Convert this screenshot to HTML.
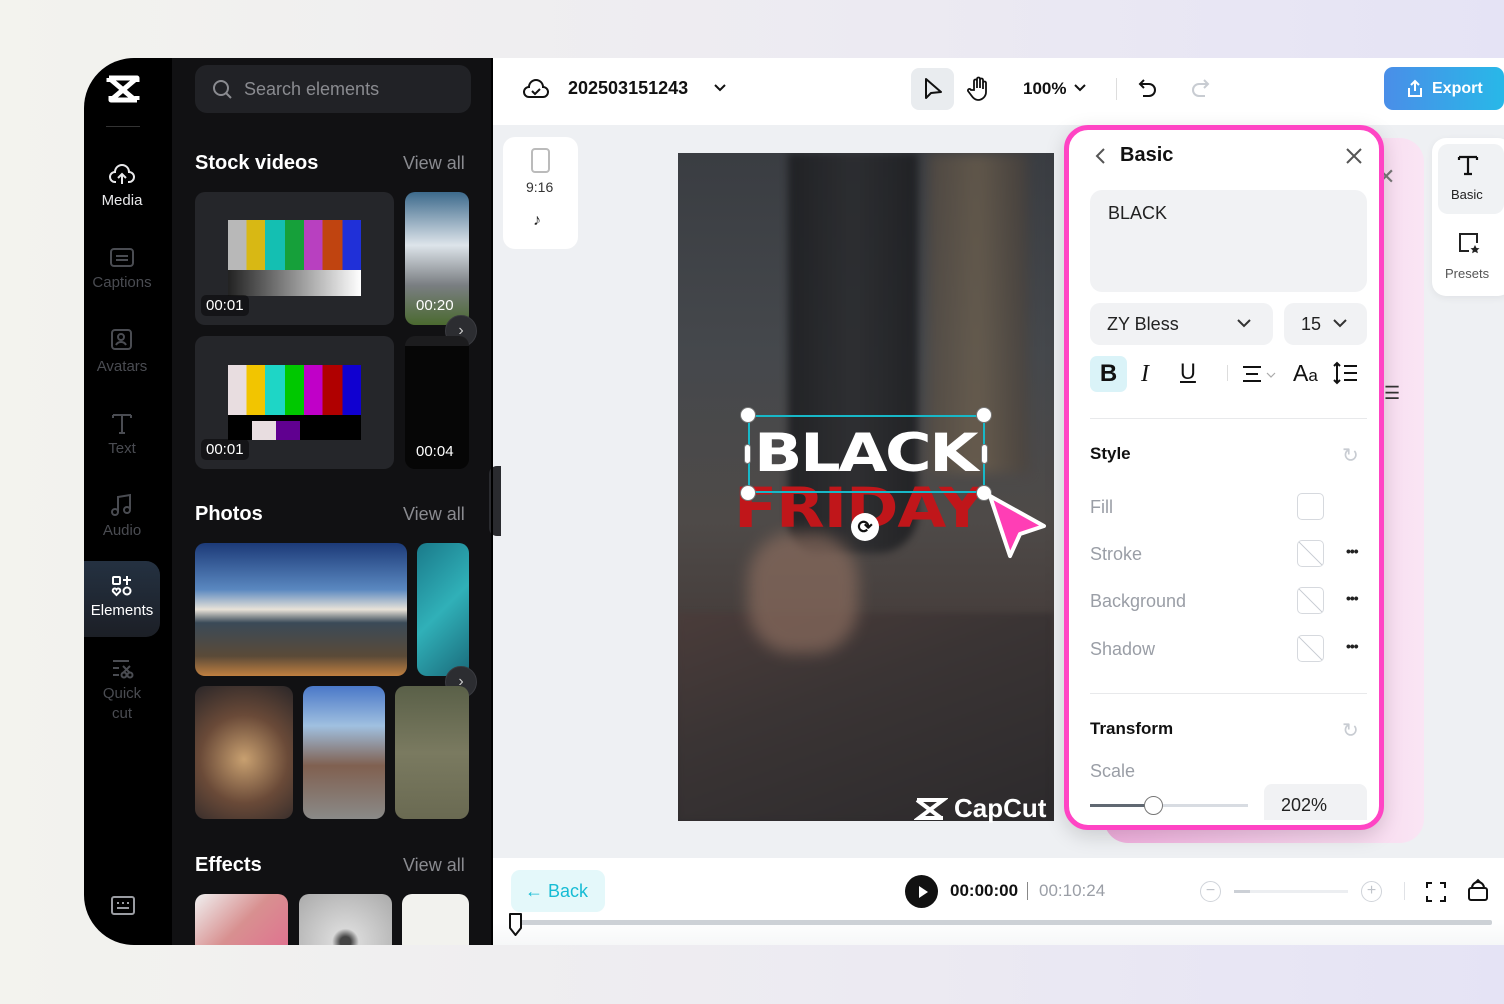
<!DOCTYPE html>
<html><head><meta charset="utf-8"><style>
*{box-sizing:border-box;margin:0;padding:0}
body{width:1504px;height:1004px;overflow:hidden;font-family:"Liberation Sans",sans-serif;background:linear-gradient(90deg,#f3f3ee 0%,#eceaf2 60%,#e5e3f5 100%);position:relative}
.abs{position:absolute}
.app{position:absolute;left:84px;top:58px;width:1420px;height:887px;border-radius:50px 0 0 50px;overflow:hidden;background:#eef0f3}
.nav{position:absolute;left:0;top:0;width:88px;height:887px;background:#000}
.navi{position:absolute;left:0;width:76px;text-align:center;color:#4a4c52;font-size:15px}
.navi svg{display:block;margin:0 auto 4px}
.panel{position:absolute;left:88px;top:0;width:321px;height:887px;background:#111113}
.h{position:absolute;color:#fff;font-size:20px;font-weight:bold}
.va{position:absolute;color:#8a8b90;font-size:18px}
.th{position:absolute;border-radius:10px;overflow:hidden}
.dur{position:absolute;color:#fff;font-size:15px;background:rgba(0,0,0,.45);padding:2px 5px;border-radius:5px}
.arrow{position:absolute;width:32px;height:32px;border-radius:50%;background:#2c2d31;border:1px solid #3a3b40;color:#ccc;text-align:center;line-height:30px;font-size:16px}
.lab{position:absolute;color:#9a9ea6;font-size:18px;left:1090px}
.sw{position:absolute;width:27px;height:27px;border:1px solid #d6d9de;border-radius:5px;left:1297px;background:linear-gradient(45deg,transparent 48%,#ccd0d6 49%,#ccd0d6 51%,transparent 52%)}
.dots{position:absolute;left:1346px;font-size:14px;font-weight:bold;color:#222;letter-spacing:-1px}
</style></head><body>
<div class="app">
 <div class="nav">
  <svg class="abs" style="left:22px;top:16px" width="34" height="30" viewBox="0 0 34 30"><path d="M3 4h28L5 26h26M3 4l26 22M3 4v4M31 4v4M5 26v-4M31 26v-4" stroke="#fff" stroke-width="5" fill="none" stroke-linejoin="round"/></svg>
  <div class="abs" style="left:22px;top:68px;width:34px;height:1px;background:#333"></div>
  <div class="navi" style="top:104px;color:#e8e8ea"><svg width="28" height="26" viewBox="0 0 28 26"><path d="M8 20H7a5 5 0 010-10 7 7 0 0114 0 5 5 0 010 10h-1M14 22V12M10 16l4-4 4 4" stroke="#e8e8ea" stroke-width="2" fill="none"/></svg>Media</div>
  <div class="navi" style="top:188px"><svg width="26" height="24" viewBox="0 0 26 24"><rect x="2" y="3" width="22" height="17" rx="3" stroke="#4a4c52" stroke-width="2" fill="none"/><path d="M7 10h12M7 14h12" stroke="#4a4c52" stroke-width="2"/></svg>Captions</div>
  <div class="navi" style="top:270px"><svg width="26" height="26" viewBox="0 0 26 26"><rect x="3" y="2" width="19" height="19" rx="3" stroke="#4a4c52" stroke-width="2" fill="none"/><circle cx="12" cy="9" r="3" stroke="#4a4c52" stroke-width="2" fill="none"/><path d="M7 17c2-4 8-4 10 0" stroke="#4a4c52" stroke-width="2" fill="none"/></svg>Avatars</div>
  <div class="navi" style="top:352px"><svg width="26" height="26" viewBox="0 0 26 26"><path d="M4 5h18M13 5v18M4 5v3M22 5v3M10 23h6" stroke="#4a4c52" stroke-width="2" fill="none"/></svg>Text</div>
  <div class="navi" style="top:434px"><svg width="26" height="26" viewBox="0 0 26 26"><path d="M9 20V5l12-2v14" stroke="#4a4c52" stroke-width="2" fill="none"/><circle cx="6" cy="20" r="3" stroke="#4a4c52" stroke-width="2" fill="none"/><circle cx="18" cy="18" r="3" stroke="#4a4c52" stroke-width="2" fill="none"/></svg>Audio</div>
  <div class="abs" style="left:0;top:503px;width:76px;height:76px;border-radius:0 14px 14px 0;background:linear-gradient(#243141,#1c1f26)"></div>
  <div class="navi" style="top:516px;color:#fff"><svg width="24" height="24" viewBox="0 0 24 24"><rect x="3" y="3" width="7" height="7" rx="1" stroke="#fff" stroke-width="2" fill="none"/><path d="M17 2v9M13 6h8" stroke="#fff" stroke-width="2"/><circle cx="17" cy="17" r="3.5" stroke="#fff" stroke-width="2" fill="none"/><path d="M6.5 21L3 17.5a2 2 0 013.5-2 2 2 0 013.5 2z" stroke="#fff" stroke-width="2" fill="none"/></svg>Elements</div>
  <div class="navi" style="top:600px;line-height:20px"><svg width="26" height="22" viewBox="0 0 26 22"><path d="M4 3h16M4 10h6M4 17h6" stroke="#4a4c52" stroke-width="2"/><circle cx="15" cy="17" r="2.5" stroke="#4a4c52" stroke-width="2" fill="none"/><circle cx="21" cy="17" r="2.5" stroke="#4a4c52" stroke-width="2" fill="none"/><path d="M14 8l7 7M21 8l-7 7" stroke="#4a4c52" stroke-width="2"/></svg>Quick<br>cut</div>
  <svg class="abs" style="left:26px;top:837px" width="26" height="22" viewBox="0 0 26 22"><rect x="2" y="2" width="22" height="17" rx="2" stroke="#9a9ca2" stroke-width="2" fill="none"/><path d="M7 8h2M12 8h2M17 8h2M7 13h12" stroke="#9a9ca2" stroke-width="2"/></svg>
 </div>
 <div class="panel">
  <div class="abs" style="left:23px;top:7px;width:276px;height:48px;border-radius:12px;background:#212226"></div>
  <svg class="abs" style="left:40px;top:21px" width="22" height="22" viewBox="0 0 22 22"><circle cx="9" cy="9" r="7" stroke="#8a8b90" stroke-width="2" fill="none"/><path d="M14 14l5 5" stroke="#8a8b90" stroke-width="2"/></svg>
  <div class="abs" style="left:72px;top:21px;color:#8a8b90;font-size:18px">Search elements</div>
  <div class="h" style="left:23px;top:94px">Stock videos</div><div class="va" style="left:231px;top:95px">View all</div>
  <div class="th" style="left:23px;top:134px;width:199px;height:133px;background:#25262a"><div class="abs" style="left:33px;top:28px;width:133px;height:76px;background:linear-gradient(90deg,#b8b8b8 0 14%,#d8b814 14% 28%,#14bfb2 28% 43%,#16a03a 43% 57%,#b840c0 57% 71%,#c04410 71% 86%,#2030d8 86%)"><div class="abs" style="left:0;top:50px;width:133px;height:26px;background:linear-gradient(90deg,#222,#fff)"></div></div><div class="dur" style="left:6px;top:103px">00:01</div></div>
  <div class="th" style="left:233px;top:134px;width:64px;height:133px;background:linear-gradient(#3d6a8c,#dde4ea 40%,#7a7e82 70%,#4b6a30)"><div class="dur" style="left:6px;top:103px;background:none">00:20</div></div>
  <div class="arrow" style="left:273px;top:257px">›</div>
  <div class="th" style="left:23px;top:278px;width:199px;height:133px;background:#25262a"><div class="abs" style="left:33px;top:29px;width:133px;height:75px;background:linear-gradient(90deg,#e8dde0 0 14%,#f2c500 14% 28%,#1ed6c6 28% 43%,#00c800 43% 57%,#c000c8 57% 71%,#b00000 71% 86%,#1000d0 86%)"><div class="abs" style="left:0;top:50px;width:133px;height:25px;background:#000"><div class="abs" style="left:24px;top:6px;width:24px;height:19px;background:#e8dde0"></div><div class="abs" style="left:48px;top:6px;width:24px;height:19px;background:#600090"></div></div></div><div class="dur" style="left:6px;top:103px">00:01</div></div>
  <div class="th" style="left:233px;top:278px;width:64px;height:133px;background:#060606;border-top:10px solid #1c1c1e"><div class="dur" style="left:6px;top:95px;background:none">00:04</div></div>
  <div class="abs" style="left:317px;top:408px;width:12px;height:70px;border-radius:8px 0 0 8px;background:#2a2b2f"></div>
  <div class="h" style="left:23px;top:445px">Photos</div><div class="va" style="left:231px;top:446px">View all</div>
  <div class="th" style="left:23px;top:485px;width:212px;height:133px;background:linear-gradient(#1c3a78 0%,#5a88c0 35%,#e8e2d8 50%,#3a4a58 60%,#5a4a38 85%,#c08040)"></div>
  <div class="th" style="left:245px;top:485px;width:52px;height:133px;background:linear-gradient(135deg,#1a7a8a,#30b0b8,#1a6a7a)"></div>
  <div class="arrow" style="left:273px;top:608px">›</div>
  <div class="th" style="left:23px;top:628px;width:98px;height:133px;background:radial-gradient(circle at 50% 55%,#c8a070,#6a4a38 50%,#2a2628)"></div>
  <div class="th" style="left:131px;top:628px;width:82px;height:133px;background:linear-gradient(#4a78c8,#a0c0e0 30%,#806050 60%,#8a8a88)"></div>
  <div class="th" style="left:223px;top:628px;width:74px;height:133px;background:linear-gradient(#5a6048,#7a7a60 50%,#6a6a52)"></div>
  <div class="h" style="left:23px;top:796px">Effects</div><div class="va" style="left:231px;top:797px">View all</div>
  <div class="th" style="left:23px;top:836px;width:93px;height:60px;background:linear-gradient(135deg,#f0f0f0,#d89090 50%,#e07090)"></div>
  <div class="th" style="left:127px;top:836px;width:93px;height:60px;background:radial-gradient(circle at 50% 80%,#444 8%,#d8d8d8 20%,#aaa)"></div>
  <div class="th" style="left:230px;top:836px;width:67px;height:60px;background:#f2f2ee"></div>
 </div>
 <!-- top bar -->
 <div class="abs" style="left:409px;top:0;width:1011px;height:67px;background:#fff"></div>
 <svg class="abs" style="left:438px;top:18px" width="28" height="26" viewBox="0 0 28 26"><path d="M7 21a5 5 0 010-10 7 7 0 0114 0 5 5 0 010 10z" stroke="#111" stroke-width="2" fill="none"/><path d="M10 15l3 3 5-5" stroke="#111" stroke-width="2" fill="none"/></svg>
 <div class="abs" style="left:484px;top:20px;font-size:18px;font-weight:bold;color:#111">202503151243</div>
 <svg class="abs" style="left:628px;top:24px" width="16" height="12" viewBox="0 0 16 12"><path d="M3 3l5 5 5-5" stroke="#111" stroke-width="2" fill="none"/></svg>
 <div class="abs" style="left:827px;top:10px;width:43px;height:42px;border-radius:8px;background:#e9ecef"></div>
 <svg class="abs" style="left:838px;top:19px" width="22" height="24" viewBox="0 0 22 24"><path d="M4 2v19l5-5 10-1z" stroke="#111" stroke-width="2" fill="none" stroke-linejoin="round"/></svg>
 <svg class="abs" style="left:883px;top:18px" width="24" height="26" viewBox="0 0 24 26"><path d="M7 14V5a1.5 1.5 0 013 0v7V3a1.5 1.5 0 013 0v9V4a1.5 1.5 0 013 0v9V7a1.5 1.5 0 013 0v9a8 8 0 01-8 8c-3 0-5-2-7-5l-3-4a1.5 1.5 0 013-1z" stroke="#111" stroke-width="1.8" fill="none"/></svg>
 <div class="abs" style="left:939px;top:21px;font-size:17px;font-weight:bold;color:#111">100%</div>
 <svg class="abs" style="left:988px;top:24px" width="16" height="12" viewBox="0 0 16 12"><path d="M3 3l5 5 5-5" stroke="#111" stroke-width="2" fill="none"/></svg>
 <div class="abs" style="left:1032px;top:20px;width:1px;height:22px;background:#ddd"></div>
 <svg class="abs" style="left:1053px;top:19px" width="22" height="24" viewBox="0 0 22 24"><path d="M7 3L3 7l4 4M3 7h9a6 6 0 010 12H6" stroke="#111" stroke-width="2" fill="none"/></svg>
 <svg class="abs" style="left:1105px;top:19px" width="22" height="24" viewBox="0 0 22 24"><path d="M15 3l4 4-4 4M19 7h-9a6 6 0 000 12h6" stroke="#c8ccd2" stroke-width="2" fill="none"/></svg>
 <div class="abs" style="left:1300px;top:9px;width:120px;height:43px;border-radius:9px;background:linear-gradient(90deg,#4a8ee8,#28b8e8);color:#fff;font-weight:bold;font-size:16px;line-height:43px;padding-left:48px">Export</div>
 <svg class="abs" style="left:1322px;top:21px" width="18" height="20" viewBox="0 0 18 20"><path d="M9 12V2M5 6l4-4 4 4M3 9v8h12V9" stroke="#fff" stroke-width="2" fill="none"/></svg>
 <!-- ratio card -->
 <div class="abs" style="left:419px;top:79px;width:75px;height:112px;border-radius:12px;background:#fff"></div>
 <div class="abs" style="left:447px;top:90px;width:19px;height:25px;border:2px solid #bbb;border-radius:4px"></div>
 <div class="abs" style="left:442px;top:121px;font-size:14px;color:#333">9:16</div>
 <div class="abs" style="left:449px;top:154px;font-size:16px;color:#222;font-weight:bold">♪</div>
 <!-- video -->
 <div class="abs" style="left:594px;top:95px;width:376px;height:668px;overflow:hidden;background:linear-gradient(180deg,#3a3d42 0%,#45484c 30%,#4e4a48 55%,#463e3c 70%,#383234 85%,#2e2c2e 100%)">
  <div class="abs" style="left:110px;top:0;width:130px;height:400px;background:linear-gradient(90deg,#1c1d20,#2a2b2e,#1c1d20);border-radius:0 0 40px 30px;opacity:.85;filter:blur(4px)"></div>
  <div class="abs" style="left:250px;top:0;width:100px;height:320px;background:linear-gradient(90deg,#5a4e42,#7a6850,#4a4038);opacity:.6;filter:blur(6px)"></div>
  <div class="abs" style="left:0;top:460px;width:376px;height:208px;background:linear-gradient(160deg,#4a3c3a,#3a3434 40%,#2c2a2c);filter:blur(3px)"></div>
  <div class="abs" style="left:70px;top:380px;width:110px;height:120px;border-radius:40%;background:#8a6c5e;opacity:.7;filter:blur(8px)"></div>
 </div>
 <svg class="abs" style="left:830px;top:738px" width="34" height="26" viewBox="0 0 34 26"><path d="M3 4h26L5 22h24M3 4l24 18" stroke="#fff" stroke-width="4" fill="none"/></svg>
 <div class="abs" style="left:870px;top:735px;color:#fff;font-size:26px;font-weight:bold">CapCut</div>
 <div class="abs" style="left:650px;top:423px;font-family:'DejaVu Sans',sans-serif;font-size:55px;font-weight:bold;color:#c0161a;letter-spacing:-1px;transform:scaleX(1.15);transform-origin:left top;line-height:55px">FRIDAY</div>
 <div class="abs" style="left:670px;top:368px;font-family:'DejaVu Sans',sans-serif;font-size:53px;font-weight:bold;color:#fff;letter-spacing:-2px;line-height:55px;transform:scaleX(1.2);transform-origin:left top">BLACK</div>
 <div class="abs" style="left:664px;top:357px;width:237px;height:78px;border:2px solid #17b8c8"></div>
 <div class="abs" style="left:656px;top:349px;width:16px;height:16px;border-radius:50%;background:#fff;border:1px solid #777"></div>
 <div class="abs" style="left:892px;top:349px;width:16px;height:16px;border-radius:50%;background:#fff;border:1px solid #777"></div>
 <div class="abs" style="left:656px;top:427px;width:16px;height:16px;border-radius:50%;background:#fff;border:1px solid #777"></div>
 <div class="abs" style="left:892px;top:427px;width:16px;height:16px;border-radius:50%;background:#fff;border:1px solid #777"></div>
 <div class="abs" style="left:660px;top:386px;width:7px;height:20px;border-radius:4px;background:#fff;border:1px solid #777"></div>
 <div class="abs" style="left:897px;top:386px;width:7px;height:20px;border-radius:4px;background:#fff;border:1px solid #777"></div>
 <div class="abs" style="left:767px;top:455px;width:28px;height:28px;border-radius:50%;background:#fff;text-align:center;line-height:28px;font-size:18px;color:#111;font-weight:bold">⟳</div>
 <svg class="abs" style="left:898px;top:430px" width="70" height="80" viewBox="0 0 70 80"><path d="M8 8l54 30-24 8-10 22z" fill="#ff3eb5" stroke="#fff" stroke-width="4" stroke-linejoin="round"/></svg>
 <!-- pink shadow card behind -->
 <div class="abs" style="left:1020px;top:80px;width:320px;height:705px;border-radius:24px;background:linear-gradient(90deg,#f2a8dc,#fbe4f4);opacity:.9"></div>
 <div class="abs" style="left:1293px;top:106px;color:#777;font-size:22px">✕</div>
 <div class="abs" style="left:1300px;top:325px;color:#333;font-size:18px">☰</div>
 <!-- right rail -->
 <div class="abs" style="left:1348px;top:80px;width:80px;height:158px;border-radius:14px;background:#fff;box-shadow:0 2px 8px rgba(0,0,0,.06)"></div>
 <div class="abs" style="left:1354px;top:86px;width:66px;height:70px;border-radius:10px;background:#f0f2f4"></div>
 <svg class="abs" style="left:1372px;top:95px" width="24" height="24" viewBox="0 0 24 24"><path d="M3 4h18M12 4v17M3 4v3M21 4v3M8 21h8" stroke="#111" stroke-width="2.2" fill="none"/></svg>
 <div class="abs" style="left:1367px;top:129px;font-size:13px;color:#222">Basic</div>
 <svg class="abs" style="left:1373px;top:173px" width="24" height="24" viewBox="0 0 24 24"><path d="M12 20H3V3h17v9" stroke="#222" stroke-width="2" fill="none"/><path d="M18 14l1.5 3 3 .3-2.3 2 .7 3-2.9-1.6-2.9 1.6.7-3-2.3-2 3-.3z" fill="#222"/></svg>
 <div class="abs" style="left:1361px;top:208px;font-size:13px;color:#555">Presets</div>
 <!-- main panel -->
 <div class="abs" style="left:980px;top:67px;width:320px;height:705px;border:5px solid #ff44c4;border-radius:24px;background:#fff;box-shadow:0 6px 20px rgba(0,0,0,.15)"></div>
 <svg class="abs" style="left:1010px;top:88px" width="14" height="20" viewBox="0 0 14 20"><path d="M10 3L3 10l7 7" stroke="#555" stroke-width="2" fill="none"/></svg>
 <div class="abs" style="left:1036px;top:86px;font-size:20px;font-weight:bold;color:#111">Basic</div>
 <svg class="abs" style="left:1260px;top:88px" width="20" height="20" viewBox="0 0 20 20"><path d="M3 3l14 14M17 3L3 17" stroke="#555" stroke-width="2"/></svg>
 <div class="abs" style="left:1006px;top:132px;width:277px;height:102px;border-radius:12px;background:#f1f2f4;padding:13px 18px;font-size:18px;color:#222">BLACK</div>
 <div class="abs" style="left:1006px;top:245px;width:183px;height:42px;border-radius:10px;background:#f1f2f4;font-size:18px;color:#222;line-height:42px;padding-left:17px">ZY Bless</div>
 <svg class="abs" style="left:1152px;top:259px" width="16" height="12" viewBox="0 0 16 12"><path d="M2 3l6 6 6-6" stroke="#333" stroke-width="2" fill="none"/></svg>
 <div class="abs" style="left:1200px;top:245px;width:83px;height:42px;border-radius:10px;background:#f1f2f4;font-size:18px;color:#222;line-height:42px;padding-left:17px">15</div>
 <svg class="abs" style="left:1248px;top:259px" width="16" height="12" viewBox="0 0 16 12"><path d="M2 3l6 6 6-6" stroke="#333" stroke-width="2" fill="none"/></svg>
 <div class="abs" style="left:1006px;top:298px;width:37px;height:36px;border-radius:7px;background:#daf3f8;text-align:center;line-height:36px;font-size:24px;font-weight:bold;color:#111">B</div>
 <div class="abs" style="left:1057px;top:303px;font-family:'Liberation Serif',serif;font-style:italic;font-size:24px;color:#111">I</div>
 <div class="abs" style="left:1096px;top:301px;font-size:22px;color:#111;text-decoration:underline">U</div>
 <div class="abs" style="left:1143px;top:307px;width:1px;height:16px;background:#ddd"></div>
 <svg class="abs" style="left:1157px;top:304px" width="40" height="24" viewBox="0 0 40 24"><path d="M2 5h18M5 12h12M2 19h18" stroke="#111" stroke-width="2"/><path d="M26 11l4 4 4-4" stroke="#aaa" stroke-width="1.2" fill="none"/></svg>
 <div class="abs" style="left:1209px;top:302px;font-size:23px;color:#111">A<span style="font-size:17px">a</span></div>
 <svg class="abs" style="left:1248px;top:302px" width="28" height="28" viewBox="0 0 28 28"><path d="M5 3v20M2 6l3-3 3 3M2 20l3 3 3-3M12 6h13M12 13h13M12 20h13" stroke="#111" stroke-width="2" fill="none"/></svg>
 <div class="abs" style="left:1006px;top:360px;width:277px;height:1px;background:#e8e9eb"></div>
 <div class="abs" style="left:1006px;top:386px;font-size:17px;font-weight:bold;color:#111">Style</div>
 <div class="abs" style="left:1258px;top:385px;font-size:20px;color:#c8ccd2">↻</div>
 <div class="lab" style="left:1006px;top:439px">Fill</div>
 <div class="abs" style="left:1213px;top:435px;width:27px;height:27px;border:1px solid #d6d9de;border-radius:5px"></div>
 <div class="lab" style="left:1006px;top:486px">Stroke</div><div class="sw" style="left:1213px;top:482px"></div><div class="dots" style="left:1262px;top:485px">•••</div>
 <div class="lab" style="left:1006px;top:533px">Background</div><div class="sw" style="left:1213px;top:529px"></div><div class="dots" style="left:1262px;top:532px">•••</div>
 <div class="lab" style="left:1006px;top:581px">Shadow</div><div class="sw" style="left:1213px;top:577px"></div><div class="dots" style="left:1262px;top:580px">•••</div>
 <div class="abs" style="left:1006px;top:635px;width:277px;height:1px;background:#e8e9eb"></div>
 <div class="abs" style="left:1006px;top:661px;font-size:17px;font-weight:bold;color:#111">Transform</div>
 <div class="abs" style="left:1258px;top:660px;font-size:20px;color:#c8ccd2">↻</div>
 <div class="lab" style="left:1006px;top:703px">Scale</div>
 <div class="abs" style="left:1006px;top:746px;width:158px;height:3px;background:#d8dce2"></div>
 <div class="abs" style="left:1006px;top:746px;width:60px;height:3px;background:#606872"></div>
 <div class="abs" style="left:1060px;top:738px;width:19px;height:19px;border-radius:50%;background:#fff;border:1.5px solid #777"></div>
 <div class="abs" style="left:1180px;top:726px;width:103px;height:36px;border-radius:8px 8px 0 0;background:#f1f2f4;font-size:18px;color:#222;padding:11px 0 0 17px">202%</div>
 <!-- bottom -->
 <div class="abs" style="left:409px;top:800px;width:1011px;height:87px;background:linear-gradient(#fff 70%,#f6f7f8)"></div>
 <div class="abs" style="left:427px;top:812px;width:94px;height:42px;border-radius:9px;background:#e4f8fa;color:#16bcd4;font-size:18px;line-height:42px;padding-left:14px">← Back</div>
 <div class="abs" style="left:821px;top:817px;width:33px;height:33px;border-radius:50%;background:#111"></div>
 <svg class="abs" style="left:833px;top:827px" width="12" height="14" viewBox="0 0 12 14"><path d="M2 1l9 6-9 6z" fill="#fff"/></svg>
 <div class="abs" style="left:866px;top:823px;font-size:17px;font-weight:bold;color:#111">00:00:00</div>
 <div class="abs" style="left:943px;top:824px;width:1px;height:18px;background:#888"></div>
 <div class="abs" style="left:955px;top:823px;font-size:17px;color:#9a9ea6">00:10:24</div>
 <div class="abs" style="left:1116px;top:823px;width:21px;height:21px;border-radius:50%;border:1.5px solid #d0d4da;text-align:center;line-height:17px;color:#c0c4ca">−</div>
 <div class="abs" style="left:1150px;top:832px;width:114px;height:3px;background:#eceef1"></div>
 <div class="abs" style="left:1150px;top:832px;width:16px;height:3px;background:#ccd0d6"></div>
 <div class="abs" style="left:1277px;top:823px;width:21px;height:21px;border-radius:50%;border:1.5px solid #d0d4da;text-align:center;line-height:17px;color:#c0c4ca">+</div>
 <div class="abs" style="left:1320px;top:824px;width:1px;height:18px;background:#e0e2e6"></div>
 <svg class="abs" style="left:1341px;top:823px" width="22" height="22" viewBox="0 0 22 22"><path d="M2 7V2h5M15 2h5v5M20 15v5h-5M7 20H2v-5" stroke="#111" stroke-width="2" fill="none"/></svg>
 <svg class="abs" style="left:1383px;top:819px" width="22" height="26" viewBox="0 0 22 26"><path d="M8 6l3-3 3 3" stroke="#111" stroke-width="1.8" fill="none"/><rect x="2" y="11" width="18" height="12" rx="2" stroke="#111" stroke-width="2" fill="none"/><path d="M5 11a6 6 0 0112 0" stroke="#111" stroke-width="2" fill="none"/></svg>
 <div class="abs" style="left:436px;top:862px;width:972px;height:5px;background:#cdd1d6;border-radius:2px"></div>
 <svg class="abs" style="left:424px;top:854px" width="16" height="26" viewBox="0 0 16 26"><path d="M2 2h11v14l-5.5 7L2 16z" fill="#fff" stroke="#111" stroke-width="2" stroke-linejoin="round"/></svg>
 <div class="abs" style="left:407px;top:0;width:2px;height:887px;background:#000"></div>
</div>
</body></html>
